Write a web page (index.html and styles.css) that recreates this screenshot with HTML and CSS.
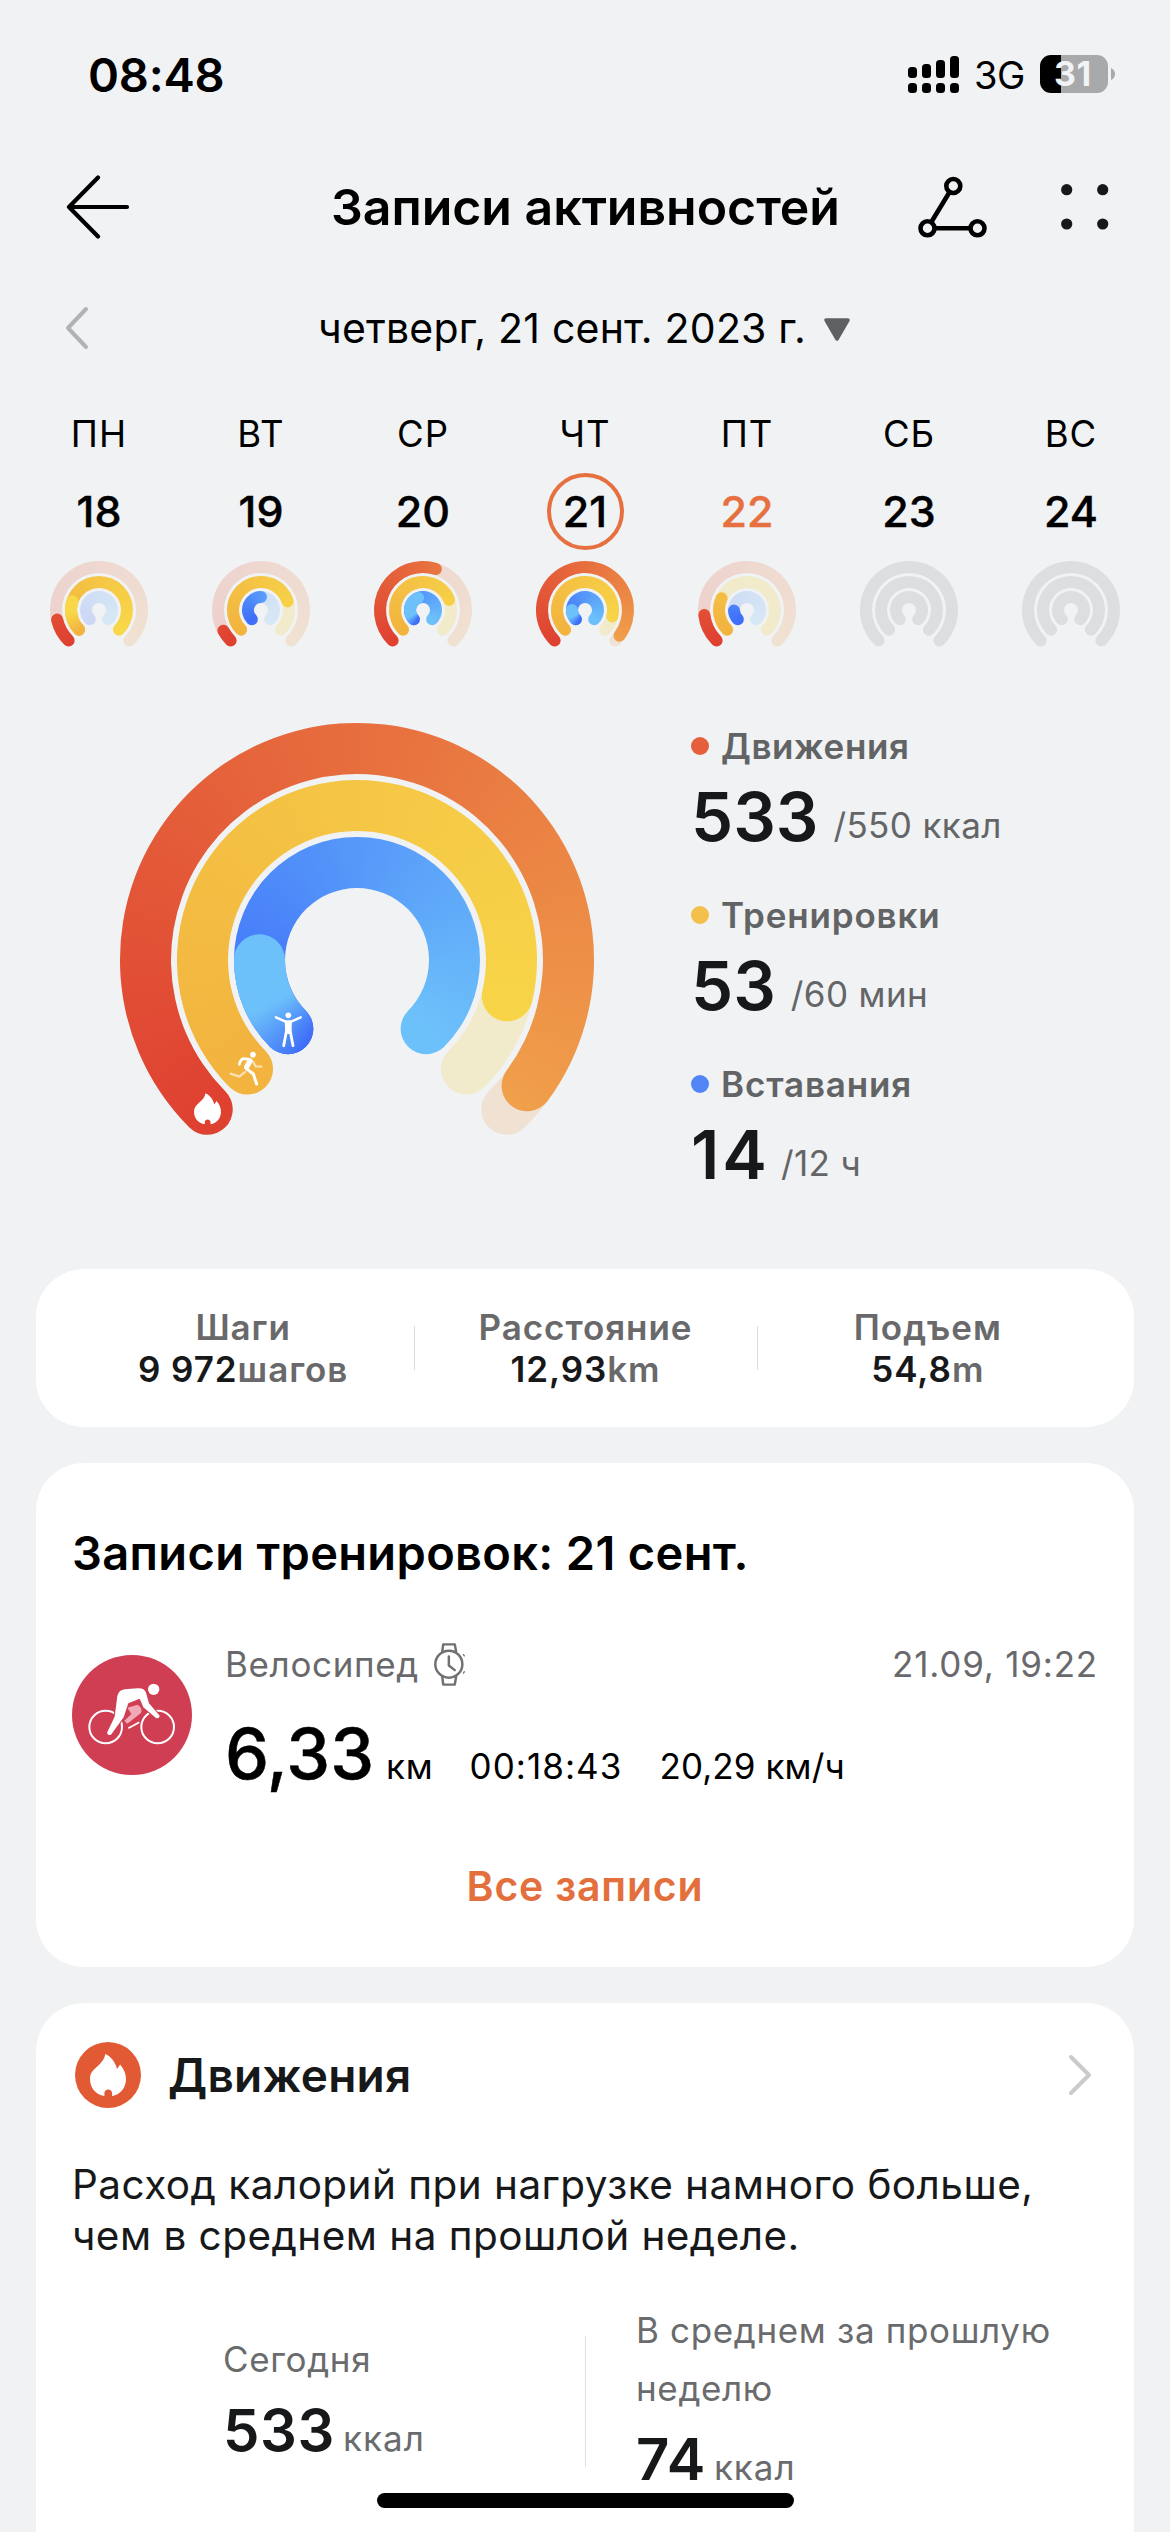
FILE: index.html
```html
<!DOCTYPE html>
<html lang="ru">
<head>
<meta charset="utf-8">
<title>Записи активностей</title>
<link rel="stylesheet" href="styles.css">
</head>
<body>
<svg class="defs" aria-hidden="true">
  <symbol id="flame" viewBox="0 0 80 92"><path fill="#fff" d="M34 0C46 5 57 18 60 33L67 23C76 34 80 44 80 54C80 74 68 88 49 92V86C49 75 32 75 32 86V92C12 88 0 74 0 54C0 30 30 26 34 0Z"/></symbol>
</svg>

<header class="status">
  <span class="time">08:48</span>
  <svg class="signal" width="51" height="38" viewBox="0 0 51 38">
    <rect x="0" y="12" width="9" height="11" rx="3.5"/><rect x="14" y="9" width="9" height="14" rx="3.5"/><rect x="28" y="5" width="9" height="18" rx="3.5"/><rect x="42" y="1" width="9" height="22" rx="3.5"/>
    <rect x="0" y="28" width="9" height="10" rx="3.5"/><rect x="14" y="28" width="9" height="10" rx="3.5"/><rect x="28" y="28" width="9" height="10" rx="3.5"/><rect x="42" y="28" width="9" height="10" rx="3.5"/>
  </svg>
  <span class="network">3G</span>
  <span class="battery">31</span>
  <svg class="nub" width="4" height="12" viewBox="0 0 4 12"><path d="M0 0Q4 2 4 6T0 12Z" fill="#a8a9ab"/></svg>
</header>

<nav class="nav">
  <svg width="64" height="64" viewBox="0 0 64 64" fill="none" stroke="#000" stroke-width="4.2" stroke-linecap="round" stroke-linejoin="round"><path d="M32 2.5L3 32L32 61.5M3 32H61"/></svg>
  <h1 class="title">Записи активностей</h1>
  <svg class="route" width="70" height="62" viewBox="0 0 70 62" fill="none" stroke="#000" stroke-width="4.6"><circle cx="35.3" cy="10" r="7"/><circle cx="9.5" cy="52.3" r="7"/><circle cx="59.5" cy="52.3" r="7"/><path d="M31.6 16L13.2 46.3M16.5 52.3H52.5"/></svg>
  <svg class="dots" width="48" height="46" viewBox="0 0 48 46" fill="#17181a"><circle cx="5.7" cy="5.7" r="5.6"/><circle cx="41.7" cy="5.7" r="5.6"/><circle cx="5.7" cy="40" r="5.6"/><circle cx="41.7" cy="40" r="5.6"/></svg>
</nav>

<div class="date">
  <svg width="24" height="44" viewBox="0 0 24 44" fill="none" stroke="#b2b3b5" stroke-width="4" stroke-linecap="round" stroke-linejoin="round"><path d="M21 3L3 22L21 41"/></svg>
  <span class="date-text">четверг, 21 сент. 2023 г.</span>
  <svg class="caret" width="28" height="24" viewBox="0 0 28 24"><path d="M3 2H25L14 21Z" fill="#5f6062" stroke="#5f6062" stroke-width="3.5" stroke-linejoin="round"/></svg>
</div>

<section class="week">
  <div class="day"><span class="dow">ПН</span><span class="num">18</span><div class="rings mini" data-values=".119,1.235,0"></div></div>
  <div class="day"><span class="dow">ВТ</span><span class="num">19</span><div class="rings mini" data-values=".06,.767,.5"></div></div>
  <div class="day"><span class="dow">СР</span><span class="num">20</span><div class="rings mini" data-values=".565,.755,1.42"></div></div>
  <div class="day"><span class="dow">ЧТ</span><span class="num selected">21</span><div class="rings mini" data-values=".969,.883,1.167"></div></div>
  <div class="day"><span class="dow">ПТ</span><span class="num today">22</span><div class="rings mini" data-values=".142,.26,.16"></div></div>
  <div class="day"><span class="dow">СБ</span><span class="num">23</span><div class="rings mini empty" data-values="0,0,0"></div></div>
  <div class="day"><span class="dow">ВС</span><span class="num">24</span><div class="rings mini empty" data-values="0,0,0"></div></div>
</section>

<section class="summary">
  <div class="rings large" data-values=".969,.883,1.167">
    <svg class="ring-icons" width="474" height="474" viewBox="0 0 474 474">
      <use href="#flame" x="74" y="370.3" width="27" height="31"/>
      <g transform="translate(50 267) scale(.33333)" fill="none" stroke="#fff" stroke-linecap="round" stroke-linejoin="round">
        <g stroke-width="7" opacity=".6"><path d="M182 251L208 260L226 245"/><path d="M250 216L257 229L274 230"/></g>
        <path stroke-width="8" d="M208 223Q212 208 220 206L240 208"/>
        <path stroke-width="16" d="M240 213L230 231"/>
        <path stroke-width="9" d="M229 236L250 252L260 282"/>
        <circle cx="249" cy="194" r="8.5" fill="#fff" stroke="none"/>
        <circle cx="355" cy="76" r="8.5" fill="#fff" stroke="none"/>
        <path stroke-width="7" d="M318 82L345 94H365L392 82"/>
        <path fill="#fff" stroke="none" d="M344 92H366L364 132H346Z"/>
        <path stroke-width="8.5" d="M350 120L341 167M360 120L369 167"/>
      </g>
    </svg>
  </div>
  <div class="legend">
    <div class="goal"><div class="goal-name move">Движения</div><div class="goal-value"><b>533</b><span>/550 ккал</span></div></div>
    <div class="goal"><div class="goal-name train">Тренировки</div><div class="goal-value"><b>53</b><span>/60 мин</span></div></div>
    <div class="goal"><div class="goal-name stand">Вставания</div><div class="goal-value"><b class="wide">14</b><span>/12 ч</span></div></div>
  </div>
</section>

<section class="card stats">
  <div class="stat"><div>Шаги</div><div><b>9 972</b>шагов</div></div>
  <div class="stat"><div>Расстояние</div><div><b>12,93</b>km</div></div>
  <div class="stat"><div>Подъем</div><div><b>54,8</b>m</div></div>
</section>

<section class="card records">
  <h2 class="records-title">Записи тренировок: 21 сент.</h2>
  <div class="workout">
    <svg class="bike" width="120" height="120" viewBox="36 105 360 360">
      <circle cx="216" cy="285" r="180" fill="#cf3e52"/>
      <g fill="none" stroke="#fff" stroke-width="6"><circle cx="137" cy="321" r="49"/><circle cx="293" cy="321" r="49"/></g>
      <path d="M202 263L233 254Q249 264 243 279L202 311L193 302L214 282Z" fill="#efa9b7"/>
      <path d="M205 325L238 307" stroke="#fff" stroke-width="5"/>
      <path d="M172 228Q176 210 194 208L232 205Q254 203 259 221L267 250L299 287Q298 297 288 294L250 262L239 236L205 250L191 292L153 344Q140 347 142 336L164 290Z" fill="#fff" stroke="#cf3e52" stroke-width="6" paint-order="stroke"/>
      <circle cx="281" cy="208" r="17" fill="#fff"/>
    </svg>
    <div class="workout-info">
      <div class="workout-head">
        <span class="workout-name">Велосипед</span>
        <svg width="33" height="45" viewBox="1118 66 100 136" fill="none" stroke="#707173" stroke-width="7.5" stroke-linejoin="round" stroke-linecap="round"><circle cx="1166" cy="133" r="41"/><path d="M1146 95L1149 73H1184L1188 95M1146 171L1149 195H1184L1188 171M1166 110V137L1184 151"/><path stroke-width="4" d="M1210 104L1213 108M1213 156L1210 160"/></svg>
        <span class="workout-date">21.09, 19:22</span>
      </div>
      <div class="workout-data"><b>6,33</b><span class="km">км</span><span class="duration">00:18:43</span><span class="speed">20,29 км/ч</span></div>
    </div>
  </div>
  <a class="all">Все записи</a>
</section>

<section class="card movement">
  <div class="movement-head">
    <span class="badge"><svg width="36" height="42" viewBox="0 0 80 92" preserveAspectRatio="none"><use href="#flame" width="80" height="92"/></svg></span>
    <h2 class="movement-title">Движения</h2>
    <svg class="more" width="24" height="42" viewBox="0 0 24 42" fill="none" stroke="#c9cacb" stroke-width="4" stroke-linecap="round" stroke-linejoin="round"><path d="M3 3L21 21L3 39"/></svg>
  </div>
  <p class="note">Расход калорий при нагрузке намного больше,<br>чем в среднем на прошлой неделе.</p>
  <div class="compare">
    <div class="current"><div class="period">Сегодня</div><div class="amount"><b>533</b><span>ккал</span></div></div>
    <div class="divider"></div>
    <div class="previous"><div class="period">В среднем за прошлую неделю</div><div class="amount"><b>74</b><span>ккал</span></div></div>
  </div>
</section>
<div class="home-bar"></div>
<script src="rings.js"></script>
</body>
</html>
```
FILE: styles.css
```css
* { box-sizing: border-box; }
body {
  margin: 0; width: 1170px; height: 2532px; overflow: hidden; position: relative;
  display: flex; flex-direction: column;
  background: #f0f2f4; color: #000;
  font-family: Inter, "Liberation Sans", sans-serif; font-size: 35px;
}
h1, h2, p { margin: 0; }
b { font-weight: 600; }
svg { display: block; flex: none; }
section, header, nav { flex: none; }
.defs { position: absolute; width: 0; height: 0; }

.status { display: flex; align-items: center; height: 148px; padding: 0 55px 0 88px; }
.time { font-size: 47px; font-weight: 600; letter-spacing: -.2px; margin-right: auto; }
.signal { margin-right: 15px; }
.network { font-size: 38px; letter-spacing: -.4px; margin-right: 15px; padding-top: 2px; }
.battery {
  width: 68px; height: 38px; border-radius: 11px; margin-right: 3px; padding-left: 14px;
  background: linear-gradient(90deg, #000 21px, #a8a9ab 21px);
  color: #f2f3f5; font-size: 34px; line-height: 38px; font-weight: 700; letter-spacing: .6px;
}

.nav { display: flex; align-items: center; height: 118px; padding: 0 61px 0 66px; }
.title { font-size: 50px; font-weight: 600; letter-spacing: -.03px; margin-left: 201px; white-space: nowrap; }
.route { margin-left: auto; margin-right: 73px; }

.date { display: flex; align-items: center; height: 124px; padding-left: 65px; }
.date-text { font-size: 41px; letter-spacing: .21px; margin: 0 17px 0 229px; }
.caret { margin-top: 4px; }

.week { display: grid; grid-template-columns: repeat(7, 162px); padding: 14px 18px 0; height: 269px; }
.day { display: flex; flex-direction: column; align-items: center; }
.dow { font-size: 36.5px; line-height: 60px; letter-spacing: 1px; }
.num { width: 77px; height: 77px; line-height: 77px; margin: 9px 0 11px; text-align: center; font-size: 43px; font-weight: 500; -webkit-text-stroke: .4px currentColor; }
.selected { border: 4px solid #e6703f; border-radius: 50%; line-height: 69px; }
.today { color: #e6703f; }

.rings { position: relative; flex: none; }
.mini { width: 98px; height: 98px; }
.large { width: 474px; height: 474px; margin-top: 2px; }
.arc, .ring-icons { position: absolute; inset: 0; }
.track { opacity: .2; }
.outer { background: conic-gradient(from 180deg, #df4131 45deg, #e76e3e 180deg, #f0a04b 315deg); }
.middle { background: conic-gradient(from 180deg, #f2b33f 45deg, #f5c645 180deg, #f8d848 315deg); }
.inner { background: conic-gradient(from 180deg, #3f6ff9 45deg, #5698f9 180deg, #6dc1fa 315deg); }
.middle.track { background: #f6d428; opacity: .2; }
.middle.lap { background: conic-gradient(from 180deg, #f2b33f 45deg, #f8d848 85deg); }
.inner.lap { background: conic-gradient(from 180deg, #3f6ff9 32deg, #6dc1fa 63deg); }
.empty .track { background: #dddee0; opacity: 1; }

.summary { display: flex; height: 610px; padding: 62px 0 0 120px; }
.legend { display: flex; flex-direction: column; gap: 27px; margin-left: 97px; }
.goal-name { display: flex; align-items: center; gap: 12px; line-height: 50px; font-weight: 600; letter-spacing: .85px; color: #626365; }
.move { letter-spacing: .6px; }
.goal-name::before { content: ""; width: 18px; height: 18px; border-radius: 50%; background: currentColor; }
.move::before { background: #e65f3c; }
.train::before { background: #f4c04b; }
.stand::before { background: #5286f7; }
.goal-value { height: 92px; line-height: 92px; white-space: nowrap; color: #646567; }
.goal-value b { font-size: 67px; color: #17181a; }
.goal-value span { margin-left: 15px; vertical-align: 3px; line-height: 1; letter-spacing: .4px; }
.goal-value .wide { letter-spacing: 3px; margin-right: -4px; }

.card { margin: 0 36px 36px; padding: 0 36px; border-radius: 48px; background: #fff; }
.stats { display: grid; grid-template-columns: repeat(3, 1fr); height: 158px; padding: 38px 35px 0 36px; }
.stat { text-align: center; font-size: 35px; font-weight: 600; line-height: 41.5px; letter-spacing: .95px; color: #69696b; height: 83px; }
.stat b { color: #17181a; }
.stat + .stat { background: linear-gradient(#dcdcde, #dcdcde) 0 19px / 1px 44px no-repeat; }

.records { height: 504px; padding-top: 60px; }
.records-title { font-size: 47px; line-height: 60px; font-weight: 600; letter-spacing: .33px; }
.workout { display: flex; gap: 33px; margin-top: 52px; }
.bike { margin-top: 20px; }
.workout-info { flex: 1; }
.workout-head { display: flex; align-items: center; height: 58px; color: #69696b; }
.workout-name { letter-spacing: .65px; margin-right: 14px; }
.workout-date { margin-left: auto; letter-spacing: .8px; }
.workout-data { display: flex; align-items: baseline; height: 111px; padding-top: 11px; line-height: 100px; }
.workout-data b { font-size: 70px; font-weight: 500; -webkit-text-stroke: .5px currentColor; }
.workout-data span { line-height: 40px; }
.km { margin-left: 12px; letter-spacing: .8px; }
.duration { margin-left: 36px; padding-bottom: 2px; letter-spacing: 1.05px; }
.speed { margin-left: 37px; letter-spacing: .1px; }
.all { display: block; margin-top: 42px; text-align: center; font-size: 41px; line-height: 80px; font-weight: 600; letter-spacing: .8px; color: #e36f3c; }

.movement { flex: 1 0 auto; margin-bottom: 0; padding-top: 39px; border-radius: 48px 48px 0 0; }
.movement-head { display: flex; align-items: center; height: 66px; padding: 0 6px 0 3px; }
.badge { display: flex; align-items: center; justify-content: center; width: 66px; height: 66px; border-radius: 50%; background: #e25a34; }
.movement-title { font-size: 46px; font-weight: 600; letter-spacing: .26px; margin-left: 27px; color: #17181a; }
.more { margin-left: auto; }
.note { margin-top: 52px; font-size: 40.5px; line-height: 50.5px; letter-spacing: .45px; color: #17181a; white-space: nowrap; }
.compare { display: grid; grid-template-columns: 513px 1px 1fr; align-items: center; margin-top: 40px; }
.current { padding-left: 151px; }
.previous { padding-left: 50px; }
.divider { height: 131px; background: #e0e0e2; }
.period { line-height: 58px; letter-spacing: .65px; color: #6a6b6d; }
.amount { height: 85px; line-height: 85px; color: #6a6b6d; }
.amount b { font-size: 58px; letter-spacing: .6px; color: #17181a; }
.amount span { margin-left: 8px; letter-spacing: 1px; }
.home-bar { position: absolute; left: 377px; bottom: 24px; width: 417px; height: 15px; border-radius: 8px; background: #000; }
```
FILE: rings.js
```
// Each ring opens at the bottom: 270 degrees clockwise from the lower left.
const START = 135, SWEEP = 270;
const NAMES = ['outer', 'middle', 'inner'];

function arcPath(c, r, w, fraction) {
  const sweep = SWEEP * fraction, h = w / 2, big = sweep > 180 ? 1 : 0;
  const at = (radius, deg) => {
    const a = deg * Math.PI / 180;
    return (c + radius * Math.cos(a)).toFixed(2) + ' ' + (c + radius * Math.sin(a)).toFixed(2);
  };
  const end = START + sweep, o = r + h, i = r - h;
  return `M${at(i, START)}A${h} ${h} 0 0 1 ${at(o, START)}A${o} ${o} 0 ${big} 1 ${at(o, end)}A${h} ${h} 0 0 1 ${at(i, end)}A${i} ${i} 0 ${big} 0 ${at(i, START)}Z`;
}

document.querySelectorAll('.rings').forEach(el => {
  const large = el.classList.contains('large');
  const c = large ? 237 : 49, w = large ? 51 : 12;
  const radii = large ? [211.5, 154.5, 97.5] : [43, 28, 13];
  const icons = el.querySelector('.ring-icons');
  el.dataset.values.split(',').map(Number).forEach((value, n) => {
    const add = (kind, fraction) => {
      const arc = document.createElement('div');
      arc.className = 'arc ' + NAMES[n] + ' ' + kind;
      arc.style.clipPath = `path("${arcPath(c, radii[n], w, fraction)}")`;
      el.insertBefore(arc, icons);
    };
    if (value < 1) add('track', 1);
    if (value > 0) add('fill', Math.min(value, 1));
    if (value > 1) add('lap', value - 1);
  });
});
```
